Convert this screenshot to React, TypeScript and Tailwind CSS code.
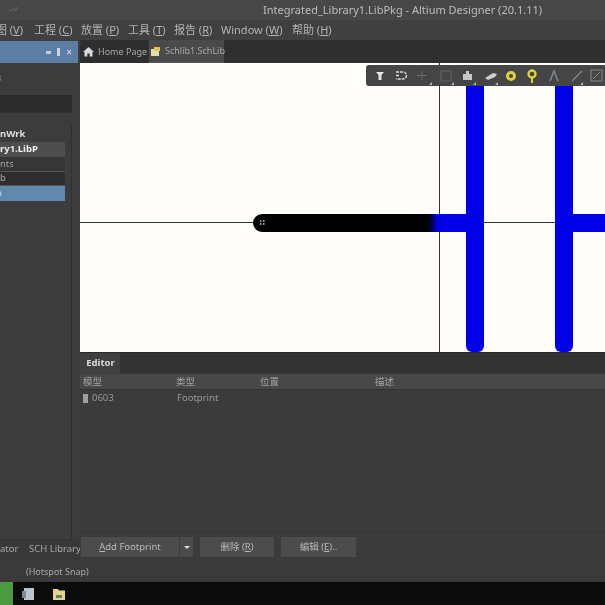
import React from "react";

const font = { fontFamily: '"Noto Sans","Noto Sans CJK SC",sans-serif' };

function Ul({ zh, k, rest = "" }: { zh: string; k: string; rest?: string }) {
  return (
    <span className="whitespace-nowrap">
      {zh} (<span className="underline">{k}</span>){rest}
    </span>
  );
}

function Menu() {
  return (
    <div className="h-5 bg-[#404040] flex items-center text-[11px] text-[#b4b4b4] shrink-0 overflow-hidden">
      <div className="w-[34px] shrink-0 flex justify-end pr-[11px]"><Ul zh="图" k="V" /></div>
      <div className="w-[47px] shrink-0"><Ul zh="工程" k="C" /></div>
      <div className="w-[47px] shrink-0"><Ul zh="放置" k="P" /></div>
      <div className="w-[46px] shrink-0"><Ul zh="工具" k="T" /></div>
      <div className="w-[47px] shrink-0"><Ul zh="报告" k="R" /></div>
      <div className="w-[71px] shrink-0"><Ul zh="Window" k="W" /></div>
      <div className="shrink-0"><Ul zh="帮助" k="H" /></div>
    </div>
  );
}

function Tabs() {
  return (
    <div className="flex-1 flex items-stretch pl-[1px] text-[9px] text-[#a8a8a8]">
      <div className="w-[66px] flex items-center gap-[4px] pl-[2px] bg-[#2e2e2e]">
        <svg className="shrink-0" width="11" height="11" viewBox="0 0 11 11"><path d="M5.5 1 L11 6 H9.5 V10.5 H6.7 V7.5 H4.3 V10.5 H1.5 V6 H0 Z" fill="#d5dbe0" /></svg>
        <span className="whitespace-nowrap">Home Page</span>
      </div>
      <div className="w-[75px] flex items-center gap-[5px] pl-[2px] bg-[#4a4a4a] border-b border-[#585858] ml-[2px]">
        <svg className="shrink-0" width="9" height="9" viewBox="0 0 9 9"><rect y="2" width="8" height="7" fill="#dbe0b0" /><rect x="3" width="6" height="4" fill="#e6c64c" /></svg>
        <span className="whitespace-nowrap">Schlib1.SchLib</span>
      </div>
    </div>
  );
}

function LeftPanel() {
  return (
    <div className="w-20 shrink-0 flex flex-col bg-[#3c3c3c] overflow-hidden">
      <div className="h-[22px] mt-[1px] w-[78px] bg-[#5d7ea3] flex items-center justify-end gap-[6px] pr-[6px] shrink-0">
        <span className="w-[5px] h-[3px] bg-[#c0d0e0]" />
        <span className="w-[3px] h-[8px] bg-[#c8d4e2]" />
        <span className="text-[10px] leading-none text-[#dce6f0]">×</span>
      </div>
      <div className="flex-1 w-[72px] flex flex-col pt-[8px] relative">
        <div className="h-[14px] mb-[10px] text-[9.5px] leading-[14px] text-[#909090] -ml-[3px] shrink-0">s</div>
        <div className="h-[18px] bg-[#2b2b2b] shrink-0 border-b border-[#333]" />
        <div className="flex-1 mt-[12px] pt-[2px] border-r border-b border-[#303030] bg-[#3c3c3c] text-[9.5px] text-[#c8c8c8]">
          <div className="h-[15px] flex items-center font-bold text-[#dedede] whitespace-nowrap">nWrk</div>
          <div className="h-[15px] flex items-center font-bold text-[#ececec] bg-[#4e4e4e] w-[65px] whitespace-nowrap">ry1.LibP</div>
          <div className="h-[14px] flex items-center text-[#a0a0a0] bg-[#363636] w-[65px]">nts</div>
          <div className="h-[15px] flex items-center text-[#a8a8a8] bg-[#2e2e2e] w-[65px] border-y border-[#555]">b</div>
          <div className="h-[15px] flex items-center text-[#d4dfe9] bg-[#6289ad] w-[65px]"><span className="-ml-[4px]">p</span></div>
        </div>
      </div>
      <div className="h-[21px] flex items-center text-[9.5px] text-[#a8a8a8] shrink-0 bg-[#383838] -mt-[1px] whitespace-nowrap">
        <span className="w-[29px] shrink-0">ator</span>
        <span className="shrink-0">SCH Library</span>
      </div>
    </div>
  );
}

function ToolGlyphs() {
  return (
    <div className="absolute right-0 top-[2px] h-[21px] w-[239px] bg-[#454545] rounded-l-[3px] z-10 overflow-hidden">
      <svg width="239" height="21" viewBox="0 1 239 21">
        <path d="M10 8 H18 L15.5 11 V16 H12.5 V11 Z" fill="#e4e4e4" />
        <path d="M30 8 H37 A3.5 3.5 0 0 1 37 15 H30 M30 11.5 H33" fill="none" stroke="#ddd" strokeWidth="1.4" strokeDasharray="3 1" />
        <path d="M51 11.5 H61 M56 7 V16" stroke="#6a6a6a" />
        <rect x="75" y="7" width="10" height="10" fill="none" stroke="#646464" />
        <path d="M97 16 V10 H100 V7 H103 V10 H106 V16 Z" fill="#c8c8c8" />
        <path d="M119 14 L127 9 L131 10 L129 13 L122 16 Z" fill="#cfcfcf" />
        <circle cx="145" cy="12" r="3.5" fill="none" stroke="#e2cf3c" strokeWidth="3" />
        <circle cx="166" cy="10" r="3.5" fill="none" stroke="#e2cf3c" strokeWidth="2.4" />
        <path d="M166 14 V19" stroke="#e2cf3c" strokeWidth="2" />
        <path d="M184 17 L188 7 L192 17" fill="none" stroke="#7f8790" strokeWidth="1.6" />
        <path d="M206 17 L216 7" stroke="#8a8a8a" strokeWidth="1.3" />
        <rect x="225" y="6" width="11" height="11" fill="none" stroke="#8a8a8a" />
        <path d="M227 15 L234 8" stroke="#8a8a8a" />
        <path d="M63 21 l3 -3 v3 z M85 21 l3 -3 v3 z M107 21 l3 -3 v3 z M129 21 l3 -3 v3 z M214 21 l3 -3 v3 z" fill="#bbb" />
      </svg>
    </div>
  );
}

function Canvas() {
  return (
    <div className="h-[289px] bg-[#fffdfa] relative shrink-0">
      <svg className="absolute inset-0" width="525" height="289" viewBox="0 0 525 289">
        <defs>
          <linearGradient id="pin" x1="0" x2="1" y1="0" y2="0">
            <stop offset="0" stopColor="#000" />
            <stop offset="1" stopColor="#0000e8" />
          </linearGradient>
        </defs>
        <path d="M0 159.5 H525" stroke="#333" strokeWidth="1" />
        <path d="M359.5 0 V289" stroke="#333" strokeWidth="1" />
        <rect x="173" y="151" width="190" height="18" rx="9" fill="#000" />
        <rect x="348" y="151" width="10" height="18" fill="url(#pin)" />
        <rect x="358" y="151" width="38" height="18" fill="#0000e8" />
        <rect x="386" y="12" width="18" height="277" rx="6" fill="#0000e8" />
        <rect x="475" y="12" width="18" height="277" rx="6" fill="#0000e8" />
        <rect x="493" y="151" width="32" height="18" fill="#0000e8" />
        <path d="M180 158 h1.5 M183 158 h1.5 M180 161 h1.5 M183 161 h1.5" stroke="#ccc" strokeWidth="1.5" />
      </svg>
      <ToolGlyphs />
    </div>
  );
}

function Editor() {
  return (
    <div className="flex-1 flex flex-col bg-[#3b3b3b] min-h-0 text-[9.5px] border-b border-[#333]">
      <div className="h-[21px] bg-[#333333] flex shrink-0 border-t border-[#2a2a2a]">
        <div className="w-[40px] pl-[1px] bg-[#404040] flex items-center justify-center font-bold text-[#dcdcdc]">Editor</div>
      </div>
      <div className="h-[16px] bg-[#484848] flex items-center text-[#a4a4a4] mt-[1px] pt-[1px] shrink-0 border-b border-[#333]">
        <span className="w-[96px] pl-[3px] relative">模型</span>
        <span className="w-[84px]">类型</span>
        <span className="w-[115px]">位置</span>
        <span>描述</span>
      </div>
      <div className="h-[16px] flex items-center text-[#999] shrink-0">
        <span className="w-[97px] pl-[3px] flex items-center gap-[4px]">
          <span className="w-[5px] h-[9px] bg-[#a0a0a0]" />
          0603
        </span>
        <span>Footprint</span>
      </div>
    </div>
  );
}

function Buttons() {
  return (
    <div className="h-[28px] bg-[#3b3b3b] flex items-center text-[9.5px] text-[#b8b8b8] shrink-0 pt-[2px] pl-[1px]">
      <div className="w-[112px] h-[20px] bg-[#4c4c4c] flex items-stretch">
        <span className="w-[98px] flex items-center justify-center"><span><span className="underline">A</span>dd Footprint</span></span>
        <span className="flex-1 flex items-center justify-center border-l border-[#3a3a3a]">
          <span className="w-0 h-0 border-x-[3px] border-x-transparent border-t-[3px] border-t-[#ddd]" />
        </span>
      </div>
      <div className="ml-[7px] w-[74px] h-[20px] bg-[#4c4c4c] flex items-center justify-center"><Ul zh="删除" k="R" /></div>
      <div className="ml-[7px] w-[75px] h-[20px] bg-[#4c4c4c] flex items-center justify-center"><Ul zh="编辑" k="E" rest=".." /></div>
    </div>
  );
}

export default function App() {
  return (
    <div className="w-[605px] h-[605px] flex flex-col overflow-hidden bg-[#3b3b3b] blur-[0.5px]" style={font}>
      <div className="h-5 bg-[#474747] flex items-center shrink-0 text-[11px] text-[#bdbdbd] whitespace-nowrap overflow-hidden">
        <svg className="ml-[8px] mr-[244px] shrink-0" width="11" height="8" viewBox="0 0 11 8"><path d="M1 6 Q4 1 9 4 M9 1 V4 H6" fill="none" stroke="#666" /></svg>
        Integrated_Library1.LibPkg - Altium Designer (20.1.11)
      </div>
      <Menu />
      <div className="flex-1 flex flex-col min-h-0">
        <div className="flex-1 flex min-h-0">
          <LeftPanel />
          <div className="flex-1 flex flex-col min-w-0 bg-[#2f2f2f]">
            <div className="h-[23px] flex shrink-0 bg-[#2f2f2f]"><Tabs /></div>
            <Canvas />
            <Editor />
            <Buttons />
          </div>
        </div>
        <div className="h-[22px] pt-[1px] bg-[#3a3a3a] flex items-center pl-[26px] text-[9px] text-[#a8a8a8] shrink-0">(Hotspot Snap)</div>
      </div>
      <div className="h-[23px] bg-[#0b0b0b] flex items-center shrink-0">
        <div className="w-[13px] h-full bg-[#4c9a42]" />
        <svg className="ml-[8px]" width="14" height="14" viewBox="0 0 14 14"><rect x="3" y="1" width="10" height="12" fill="#b9c4cc" /><rect x="1" y="4" width="4" height="7" fill="#7f8c96" /></svg>
        <svg className="ml-[17px]" width="14" height="14" viewBox="0 0 14 14"><path d="M1 2 H6 L7 3.5 H13 V13 H1 Z" fill="#e3d48a" /><rect x="4" y="8" width="6" height="3" fill="#5f7f74" /></svg>
      </div>
    </div>
  );
}
